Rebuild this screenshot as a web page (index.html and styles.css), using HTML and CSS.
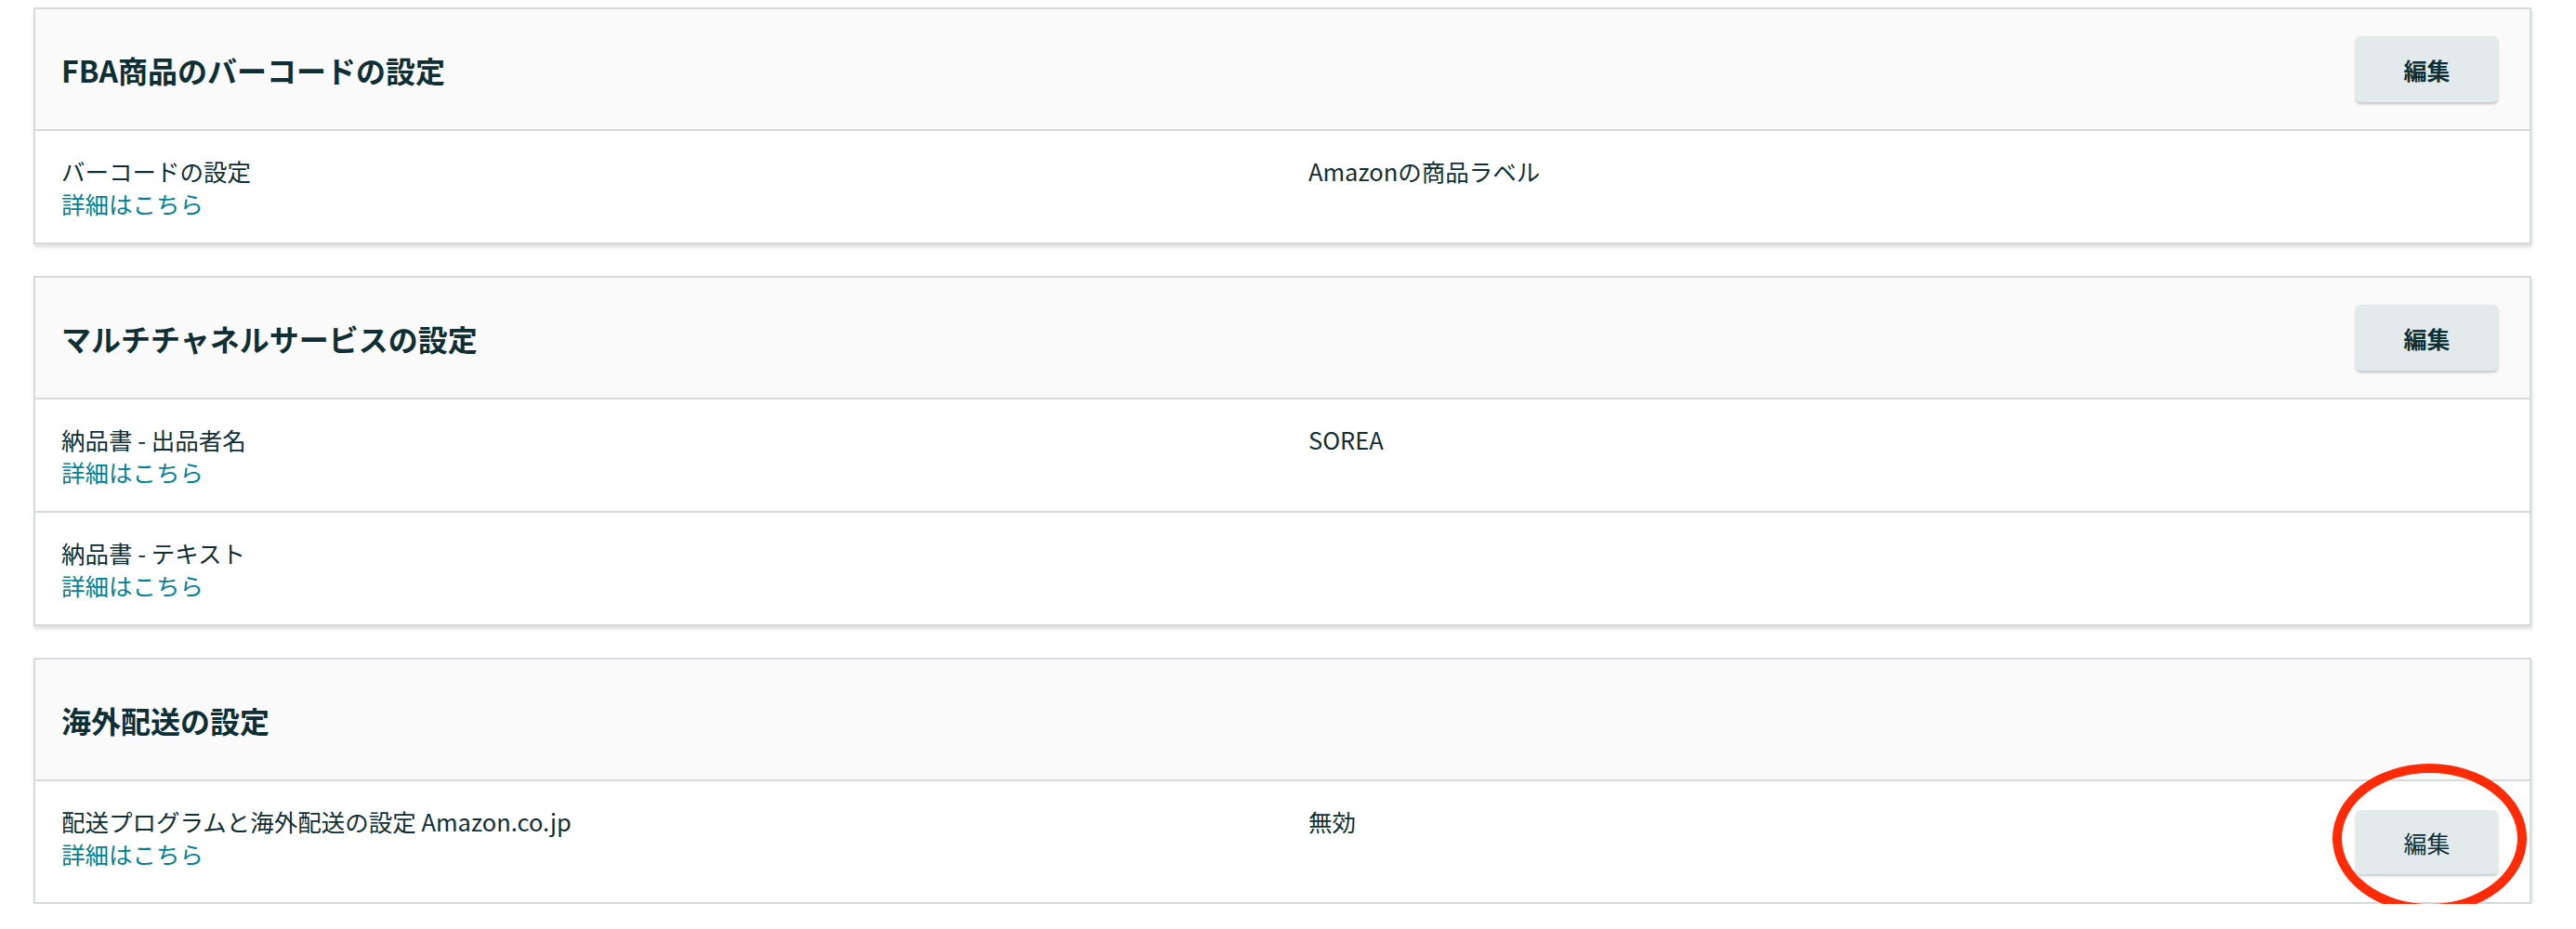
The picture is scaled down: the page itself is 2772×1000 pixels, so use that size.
FILE: index.html
```html
<!DOCTYPE html>
<html lang="ja">
<head>
<meta charset="utf-8">
<title>設定</title>
<link rel="stylesheet" href="styles.css">
</head>
<body>
<main class="page">
  <section class="card">
    <header class="card-head">
      <h2 class="card-title">FBA商品のバーコードの設定</h2>
      <button class="btn btn-bold">編集</button>
    </header>
    <div class="row">
      <div class="label">
        <div>バーコードの設定</div>
        <a class="link" href="#">詳細はこちら</a>
      </div>
      <div class="value">Amazonの商品ラベル</div>
      <div class="action"></div>
    </div>
  </section>

  <section class="card">
    <header class="card-head">
      <h2 class="card-title">マルチチャネルサービスの設定</h2>
      <button class="btn btn-bold">編集</button>
    </header>
    <div class="row">
      <div class="label">
        <div>納品書 - 出品者名</div>
        <a class="link" href="#">詳細はこちら</a>
      </div>
      <div class="value">SOREA</div>
      <div class="action"></div>
    </div>
    <div class="row">
      <div class="label">
        <div>納品書 - テキスト</div>
        <a class="link" href="#">詳細はこちら</a>
      </div>
      <div class="value"></div>
      <div class="action"></div>
    </div>
  </section>

  <section class="card">
    <header class="card-head">
      <h2 class="card-title">海外配送の設定</h2>
    </header>
    <div class="row">
      <div class="label">
        <div>配送プログラムと海外配送の設定 Amazon.co.jp</div>
        <a class="link" href="#">詳細はこちら</a>
      </div>
      <div class="value">無効</div>
      <div class="action">
        <div class="btn-wrap">
          <button class="btn btn-row">編集</button>
          <span class="circle"></span>
        </div>
      </div>
    </div>
  </section>
</main>
</body>
</html>
```

FILE: styles.css
```css
* { box-sizing: border-box; }

html, body {
  margin: 0;
  padding: 0;
  background: #ffffff;
}

body {
  font-family: "Noto Sans CJK JP", "Noto Sans", sans-serif;
  color: #0f2f35;
  font-size: 25.5px;
  line-height: 35px;
}

.page {
  padding: 8px 48px 0 36px;
  display: flex;
  flex-direction: column;
  gap: 34px;
}

.card {
  border: 2px solid #d5dbdb;
  background: #ffffff;
  box-shadow: 1px 3px 4px rgba(0, 0, 0, 0.13);
}

.card-head {
  height: 131px;
  background: #fafafa;
  border-bottom: 2px solid #d5dbdb;
  display: flex;
  align-items: center;
  justify-content: space-between;
  padding: 0 34px 0 28px;
}

.card-title {
  margin: 0;
  font-size: 32px;
  font-weight: 700;
  line-height: 40px;
  color: #0f2f35;
}

.btn {
  display: block;
  width: 153px;
  height: 71px;
  border: none;
  border-radius: 5px;
  background: #e3eaeb;
  box-shadow: 0 2px 3px rgba(0, 0, 0, 0.22);
  font-family: "Noto Sans CJK JP", "Noto Sans", sans-serif;
  font-size: 25px;
  color: #0f2f35;
  padding: 0;
  cursor: pointer;
}

.btn-bold { font-weight: 700; }
.btn-row { font-weight: 400; height: 69px; }

.row {
  display: grid;
  grid-template-columns: 1342px 1fr auto;
  align-items: start;
  min-height: 122px;
  padding: 25px 34px 25px 28px;
  border-bottom: 2px solid #d5dbdb;
}

.row:last-child { border-bottom: none; min-height: 120px; }

.label, .value {
  font-size: 25.5px;
  line-height: 35px;
}

.link {
  display: block;
  color: #008296;
  text-decoration: none;
}

.action {
  align-self: center;
}

.btn-wrap {
  position: relative;
  margin: 6px 0 5px;
}

.circle {
  position: absolute;
  left: -25px;
  top: -50px;
  width: 209px;
  height: 161px;
  border: 10px solid #ff2a06;
  border-radius: 50%;
  pointer-events: none;
}
```
